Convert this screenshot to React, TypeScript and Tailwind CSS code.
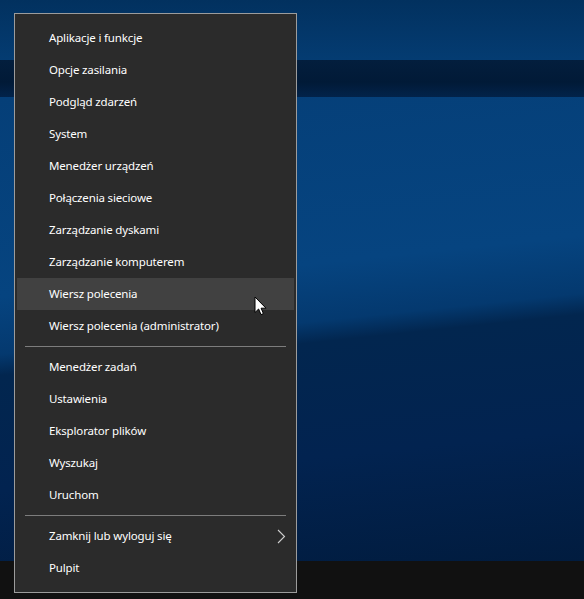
type Item = { label: string; hover?: boolean; sub?: boolean };

const groups: Item[][] = [
  [
    { label: 'Aplikacje i funkcje' },
    { label: 'Opcje zasilania' },
    { label: 'Podgląd zdarzeń' },
    { label: 'System' },
    { label: 'Menedżer urządzeń' },
    { label: 'Połączenia sieciowe' },
    { label: 'Zarządzanie dyskami' },
    { label: 'Zarządzanie komputerem' },
    { label: 'Wiersz polecenia', hover: true },
    { label: 'Wiersz polecenia (administrator)' },
  ],
  [
    { label: 'Menedżer zadań' },
    { label: 'Ustawienia' },
    { label: 'Eksplorator plików' },
    { label: 'Wyszukaj' },
    { label: 'Uruchom' },
  ],
  [{ label: 'Zamknij lub wyloguj się', sub: true }, { label: 'Pulpit' }],
];

function Cursor() {
  return (
    <svg width="13" height="20" viewBox="0 0 13 20" className="absolute left-[254px] top-[296px]">
      <path
        d="M1 1 L1 16.5 L4.6 13 L7 18.6 L9.4 17.6 L7.1 12.2 L12 12.2 Z"
        fill="#fff"
        stroke="#000"
        strokeWidth="1"
      />
    </svg>
  );
}

function Chevron() {
  return (
    <svg width="9" height="15" viewBox="0 0 9 15" className="text-[#cfcfcf]">
      <polyline points="1,1 7.5,7.5 1,14" fill="none" stroke="currentColor" strokeWidth="1.1" />
    </svg>
  );
}

function Menu() {
  return (
    <div className="absolute left-[14px] top-[13px] w-[283px] border border-[#9c9c9c] bg-[#2b2b2b] py-2 font-['Noto_Sans',sans-serif] text-[11.5px] tracking-[-0.15px] text-white">
      {groups.map((group, gi) => (
        <div key={gi}>
          {gi > 0 && (
            <div className="flex h-[9px] items-center px-[10px]">
              <div className="h-px w-full bg-[#7d7d7d]" />
            </div>
          )}
          {group.map((item) => (
            <div
              key={item.label}
              className={`mx-[2px] flex h-[32px] items-center justify-between pl-[32px] pr-[8px] ${
                item.hover ? 'bg-[#414141]' : ''
              }`}
            >
              <span>{item.label}</span>
              {item.sub && <Chevron />}
            </div>
          ))}
        </div>
      ))}
    </div>
  );
}

export default function App() {
  return (
    <div className="relative flex h-[599px] w-[584px] flex-col overflow-hidden bg-[#111111]">
      {/* desktop wallpaper */}
      <div className="flex h-[561px] flex-col bg-[#04366a]">
        <div className="h-[60px] bg-[linear-gradient(180deg,#02315f,#043c72)]" />
        <div className="h-[37px] bg-[linear-gradient(180deg,#031e3d,#011a37_60%,#02234a)]" />
        <div className="flex-1 bg-[linear-gradient(174deg,#053f78_0%,#064480_38%,#04396f_49%,#02264f_53%,#022350_75%,#011c3f_100%)]" />
      </div>
      {/* taskbar */}
      <div className="flex-1 bg-[#111111]" />
      <Menu />
      <Cursor />
    </div>
  );
}
